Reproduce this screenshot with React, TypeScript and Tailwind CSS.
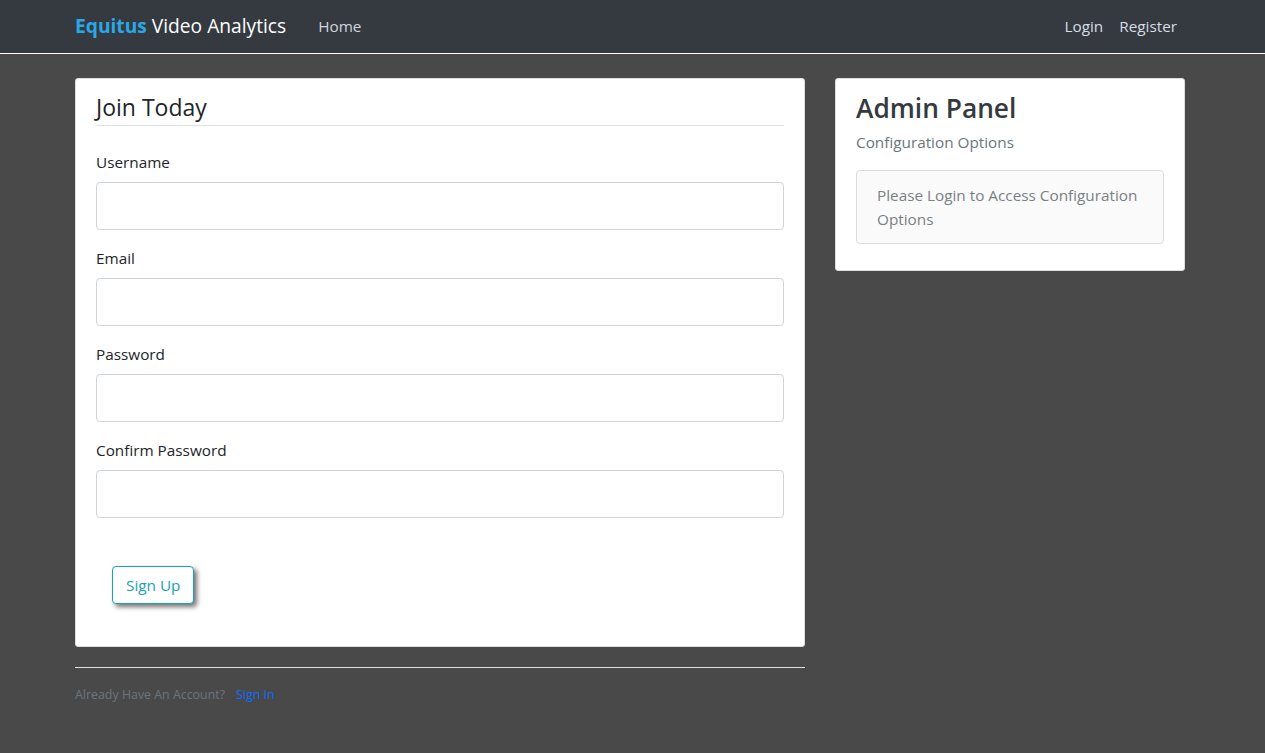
import React from "react";

const font = { fontFamily: '"Open Sans", "Noto Sans", sans-serif' };

function Field({ label }: { label: string }) {
  return (
    <div className="flex flex-col">
      <label className="text-[15.3px] leading-[24px] text-[#212529] mb-[8px]">{label}</label>
      <input className="h-[48px] w-full rounded-[4px] border border-[#ced4da] bg-white px-3 outline-none" />
    </div>
  );
}

export default function App() {
  return (
    <div className="min-h-[753px] bg-[#494949]" style={font}>
      <nav className="h-[54px] bg-[#343a40] border-b border-white">
        <div className="ml-[75px] flex h-[53px] w-[1110px] items-center">
          <div className="text-[19.2px] text-white mr-[32px]">
            <span className="font-bold text-[#2aa8e6]">Equitus</span> Video Analytics
          </div>
          <span className="text-[15.3px] text-[#d0d6dc]">Home</span>
          <div className="ml-auto mr-[8px] flex gap-[16px] text-[15.3px] text-[#d6dde4]">
            <span>Login</span>
            <span>Register</span>
          </div>
        </div>
      </nav>
      <main className="ml-[75px] mt-[24px] flex w-[1110px] gap-[30px]">
        <div className="w-[730px] flex flex-col">
          <div className="rounded-[3px] border border-[#ddd] bg-white px-[20px] pt-[12px] pb-[42px]">
            <div className="border-b border-[#dee2e6] pb-[2px] text-[23px] leading-[32px] text-[#212529]">Join Today</div>
            <div className="mt-[24px] flex flex-col gap-[16px]">
              <Field label="Username" />
              <Field label="Email" />
              <Field label="Password" />
              <Field label="Confirm Password" />
            </div>
            <div className="mt-[48px] pl-[16px]">
              <button className="h-[38px] rounded-[4px] border border-[#17a2b8] bg-white px-[13px] text-[15.3px] text-[#17a2b8] shadow-[3px_3px_5px_rgba(0,0,0,0.55)]">
                Sign Up
              </button>
            </div>
          </div>
          <div className="mt-[20px] border-t border-[#e0e0e0] pt-[18px] text-[12.4px] text-[#6c757d]">
            Already Have An Account?<span className="ml-[11px] text-[#0d6efd]">Sign In</span>
          </div>
        </div>
        <div className="w-[350px] self-start rounded-[3px] border border-[#ddd] bg-white px-[20px] pt-[10px] pb-[26px]">
          <h3 className="text-[26.3px] leading-[38px] font-semibold text-[#343a40]">Admin Panel</h3>
          <p className="mt-[3px] text-[15.3px] leading-[24px] text-[#6c757d]">Configuration Options</p>
          <div className="mt-[16px] rounded-[4px] border border-[#dcdcdc] bg-[#fafafa] px-[20px] py-[12px] text-[15.3px] leading-[24px] text-[#7a7f85]">
            Please Login to Access Configuration Options
          </div>
        </div>
      </main>
    </div>
  );
}
